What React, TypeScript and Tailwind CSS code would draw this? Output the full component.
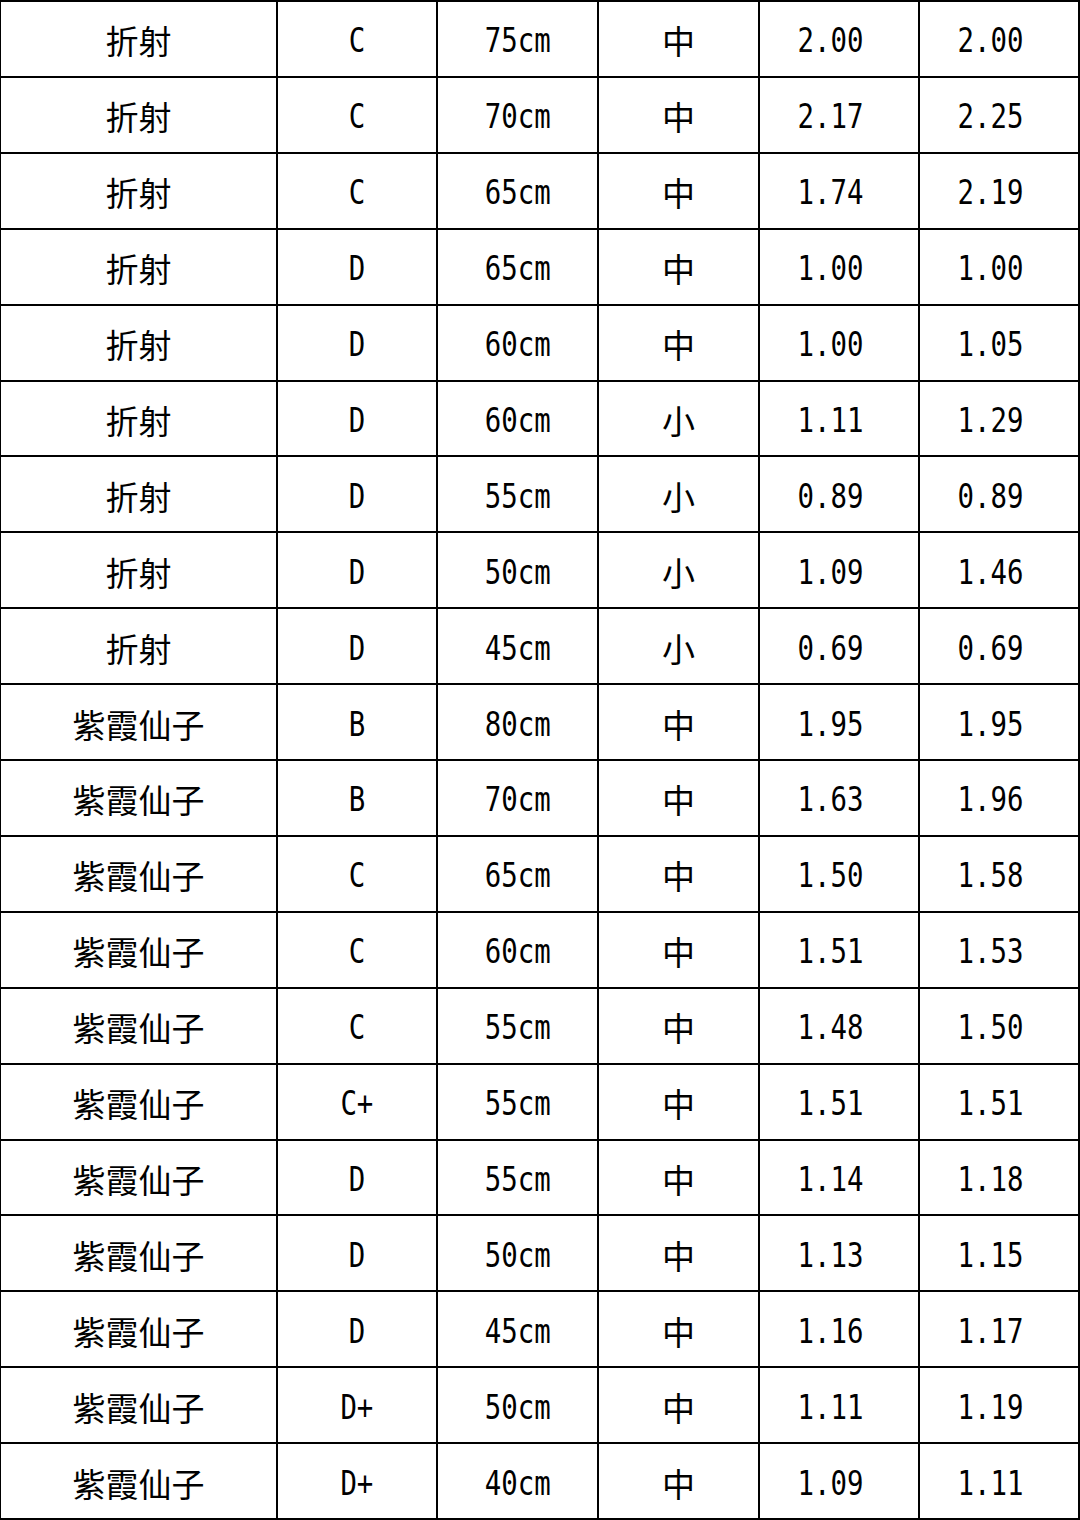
import React from "react"

interface Row {
    name: string,
    grade: string,
    length: string,
    size: string,
    a: string,
    b: string
}

const rows: Row[] = [
    { name: "折射", grade: "C", length: "75cm", size: "中", a: "2.00", b: "2.00" },
    { name: "折射", grade: "C", length: "70cm", size: "中", a: "2.17", b: "2.25" },
    { name: "折射", grade: "C", length: "65cm", size: "中", a: "1.74", b: "2.19" },
    { name: "折射", grade: "D", length: "65cm", size: "中", a: "1.00", b: "1.00" },
    { name: "折射", grade: "D", length: "60cm", size: "中", a: "1.00", b: "1.05" },
    { name: "折射", grade: "D", length: "60cm", size: "小", a: "1.11", b: "1.29" },
    { name: "折射", grade: "D", length: "55cm", size: "小", a: "0.89", b: "0.89" },
    { name: "折射", grade: "D", length: "50cm", size: "小", a: "1.09", b: "1.46" },
    { name: "折射", grade: "D", length: "45cm", size: "小", a: "0.69", b: "0.69" },
    { name: "紫霞仙子", grade: "B", length: "80cm", size: "中", a: "1.95", b: "1.95" },
    { name: "紫霞仙子", grade: "B", length: "70cm", size: "中", a: "1.63", b: "1.96" },
    { name: "紫霞仙子", grade: "C", length: "65cm", size: "中", a: "1.50", b: "1.58" },
    { name: "紫霞仙子", grade: "C", length: "60cm", size: "中", a: "1.51", b: "1.53" },
    { name: "紫霞仙子", grade: "C", length: "55cm", size: "中", a: "1.48", b: "1.50" },
    { name: "紫霞仙子", grade: "C+", length: "55cm", size: "中", a: "1.51", b: "1.51" },
    { name: "紫霞仙子", grade: "D", length: "55cm", size: "中", a: "1.14", b: "1.18" },
    { name: "紫霞仙子", grade: "D", length: "50cm", size: "中", a: "1.13", b: "1.15" },
    { name: "紫霞仙子", grade: "D", length: "45cm", size: "中", a: "1.16", b: "1.17" },
    { name: "紫霞仙子", grade: "D+", length: "50cm", size: "中", a: "1.11", b: "1.19" },
    { name: "紫霞仙子", grade: "D+", length: "40cm", size: "中", a: "1.09", b: "1.11" },
]

const cell = "flex items-center justify-center border-r-2 border-b-2 border-black pt-[4px]"

function Cjk({ text }: { text: string }) {
    return <span className="font-['Noto_Sans_CJK_SC',sans-serif] text-[33px] leading-none text-black">{text}</span>
}

function Latin({ text }: { text: string }) {
    return <span className="inline-block scale-x-[0.83] font-['DejaVu_Sans_Mono',monospace] text-[33px] leading-none text-black whitespace-pre">{text}</span>
}

export default function App() {
    return (
        <div className="w-[1080px] h-[1520px] bg-white border-t-2 border-l border-black grid grid-cols-[277px_160px_161px_161px_160px_160px] grid-rows-[repeat(20,1fr)]">
            {rows.map((r, i) => (
                <React.Fragment key={i}>
                    <div className={cell}><Cjk text={r.name} /></div>
                    <div className={cell}><Latin text={r.grade} /></div>
                    <div className={cell}><Latin text={r.length} /></div>
                    <div className={cell}><Cjk text={r.size} /></div>
                    <div className={cell}><Latin text={r.a + " "} /></div>
                    <div className={cell}><Latin text={r.b + " "} /></div>
                </React.Fragment>
            ))}
        </div>
    )
}
